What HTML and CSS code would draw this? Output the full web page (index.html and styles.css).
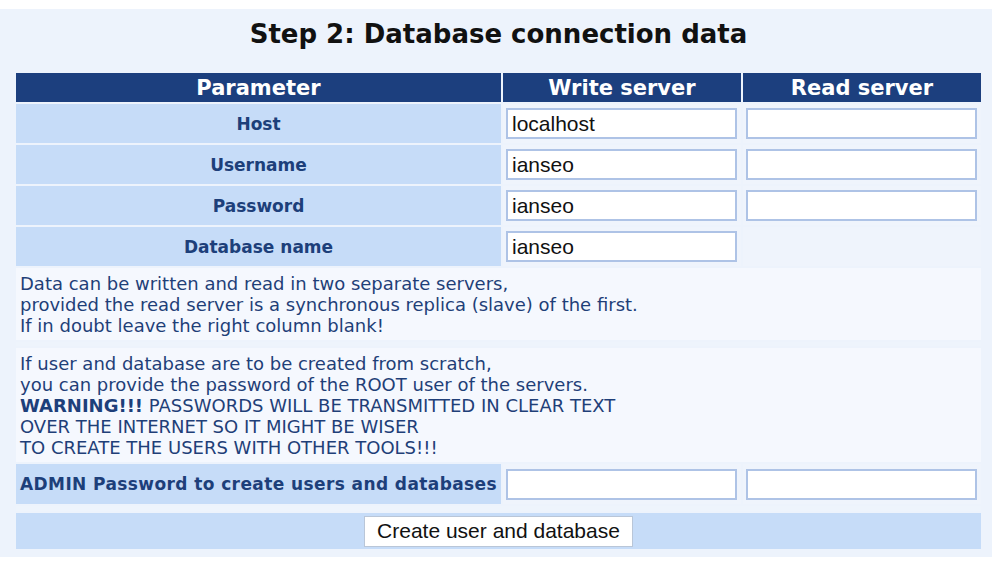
FILE: index.html
```html
<!DOCTYPE html>
<html>
<head>
<meta charset="utf-8">
<link rel="stylesheet" href="styles.css">
</head>
<body>
<div class="page">
  <h1 class="title">Step 2: Database connection data</h1>
  <table class="grid">
    <colgroup>
      <col class="c-param">
      <col class="c-srv">
      <col class="c-srv">
    </colgroup>
    <tr class="head">
      <th>Parameter</th>
      <th>Write server</th>
      <th>Read server</th>
    </tr>
    <tr class="row">
      <th class="label">Host</th>
      <td class="field"><input class="inp" type="text" value="localhost"></td>
      <td class="field"><input class="inp" type="text" value=""></td>
    </tr>
    <tr class="row">
      <th class="label">Username</th>
      <td class="field"><input class="inp" type="text" value="ianseo"></td>
      <td class="field"><input class="inp" type="text" value=""></td>
    </tr>
    <tr class="row">
      <th class="label">Password</th>
      <td class="field"><input class="inp" type="text" value="ianseo"></td>
      <td class="field"><input class="inp" type="text" value=""></td>
    </tr>
    <tr class="row">
      <th class="label">Database name</th>
      <td class="field"><input class="inp" type="text" value="ianseo"></td>
      <td class="field"></td>
    </tr>
    <tr>
      <td class="note" colspan="3">Data can be written and read in two separate servers,<br>provided the read server is a synchronous replica (slave) of the first.<br>If in doubt leave the right column blank!</td>
    </tr>
    <tr class="spacer"><td colspan="3"></td></tr>
    <tr>
      <td class="note" colspan="3">If user and database are to be created from scratch,<br>you can provide the password of the ROOT user of the servers.<br><b>WARNING!!!</b> PASSWORDS WILL BE TRANSMITTED IN CLEAR TEXT<br>OVER THE INTERNET SO IT MIGHT BE WISER<br>TO CREATE THE USERS WITH OTHER TOOLS!!!</td>
    </tr>
    <tr class="row admin-row">
      <th class="label admin">ADMIN Password to create users and databases</th>
      <td class="field"><input class="inp" type="password" value=""></td>
      <td class="field"><input class="inp" type="password" value=""></td>
    </tr>
    <tr class="spacer spacer-lg"><td colspan="3"></td></tr>
    <tr>
      <td class="action" colspan="3"><button class="btn" type="button">Create user and database</button></td>
    </tr>
  </table>
</div>
</body>
</html>
```

FILE: styles.css
```css
html, body {
  margin: 0;
  padding: 0;
  background: #ffffff;
}
body {
  padding-top: 9px;
  font-family: "DejaVu Sans", Verdana, sans-serif;
}
.page {
  background: #edf3fc;
  height: 548px;
  padding: 1px 9px 0 14px;
  box-sizing: border-box;
}
.title {
  margin: 9px 0 0 0;
  height: 52px;
  text-align: center;
  font-size: 26px;
  line-height: 30px;
  font-weight: bold;
  color: #111111;
}
.grid {
  width: 969px;
  border-collapse: separate;
  border-spacing: 2px;
  table-layout: fixed;
}
.c-param { width: 485px; }
.c-srv { width: 238px; }
.head th {
  background: #1c3f7e;
  color: #ffffff;
  font-size: 21px;
  line-height: 24px;
  height: 29px;
  padding: 0;
  font-weight: bold;
  box-sizing: border-box;
}
.row { height: 39px; }
.admin-row { height: 40px; }
.label {
  background: #c6dcf8;
  color: #1d3f7a;
  font-size: 17px;
  font-weight: bold;
  padding: 0;
  text-align: center;
}
.label.admin {
  text-align: left;
  padding-left: 4px;
  font-size: 17px;
  letter-spacing: 0.4px;
}
.field {
  background: #eff4fc;
  padding: 0 4px 0 3px;
  vertical-align: middle;
}
.inp {
  display: block;
  width: 100%;
  height: 31px;
  box-sizing: border-box;
  border: 2px solid #aec3e6;
  background: #ffffff;
  font-family: "Liberation Sans", Arial, sans-serif;
  font-size: 21px;
  color: #111111;
  padding: 0 4px;
  margin: 0;
}
.note {
  background: #f5f8fe;
  color: #1f3f78;
  font-size: 18px;
  line-height: 21px;
  padding: 5px 4px 4px 4px;
}
.note b { color: #1d3f7a; }
.spacer td {
  height: 4px;
  padding: 0;
  background: #eef4fc;
}
.spacer-lg td { height: 5px; }
.action {
  background: #c6dcf8;
  text-align: center;
  height: 36px;
  padding: 0;
}
.btn {
  font-family: "Liberation Sans", Arial, sans-serif;
  font-size: 21px;
  color: #111111;
  background: #ffffff;
  border: 1px solid #b9c6d8;
  height: 31px;
  width: 269px;
  padding: 0;
  margin: 0;
  vertical-align: middle;
}
```
